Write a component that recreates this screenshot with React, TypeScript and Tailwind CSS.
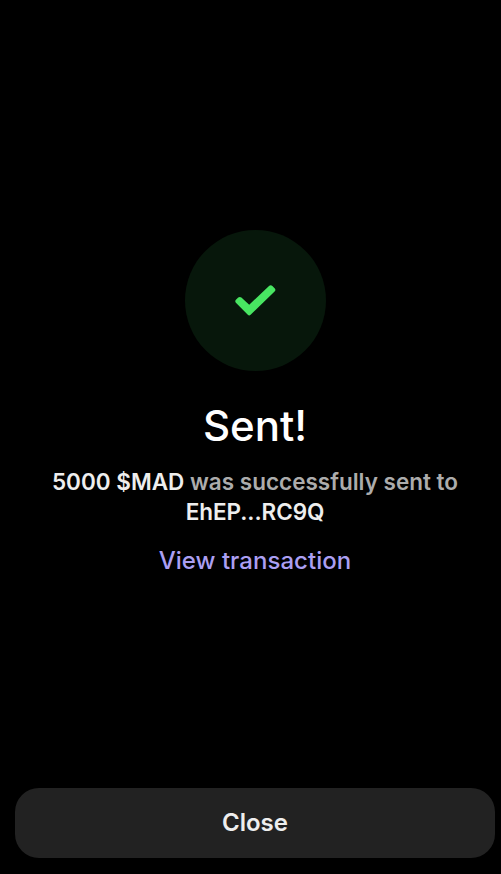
import React from 'react';

const transfer = {
  amount: '5000 $MAD',
  recipient: 'EhEP...RC9Q',
};

const SuccessBadge: React.FC = () => (
  <div className="flex size-[141px] items-center justify-center rounded-full bg-[#07170b]">
    <svg viewBox="0 0 41 32" className="h-8 w-[41px]">
      <path
        d="M0.9 17.8 Q-0.4 16.3 0.9 14.8 L3.2 12.6 Q4.8 11.2 6.4 12.6 L14.2 19.8 L34 0.9 Q35.7 -0.6 37.4 0.9 L39.6 3.2 Q41.2 4.9 39.6 6.6 L15.6 29.8 Q14.2 31 12.8 29.8 Z"
        fill="#48e562"
      />
    </svg>
  </div>
);

const App: React.FC = () => {
  return (
    <div className="flex h-screen flex-col overflow-hidden bg-black pr-1.5 pb-4 pl-[15px] font-['Inter',sans-serif] text-white">
      <main className="flex flex-1 flex-col items-center pt-[230px] text-center">
        <SuccessBadge />
        <h1 className="mt-[29px] text-[42px] leading-[52px] font-medium">Sent!</h1>
        <p className="mt-[15px] text-[22.5px] leading-[30px] font-semibold text-[#acacac]">
          <span className="text-[#eeeeee]">{transfer.amount}</span> was successfully sent to
          <br />
          <span className="tracking-[-0.06px] text-[#eeeeee]">{transfer.recipient}</span>
        </p>
        <button className="mt-[19px] text-[24px] leading-[30px] font-medium tracking-[0.04px] text-[#ab9ff2]">
          View transaction
        </button>
      </main>
      <button className="h-[70px] w-full rounded-[24px] bg-[#222222] text-[24px] leading-[30px] font-semibold text-[#eeeeee]">
        Close
      </button>
    </div>
  );
};

export default App;
